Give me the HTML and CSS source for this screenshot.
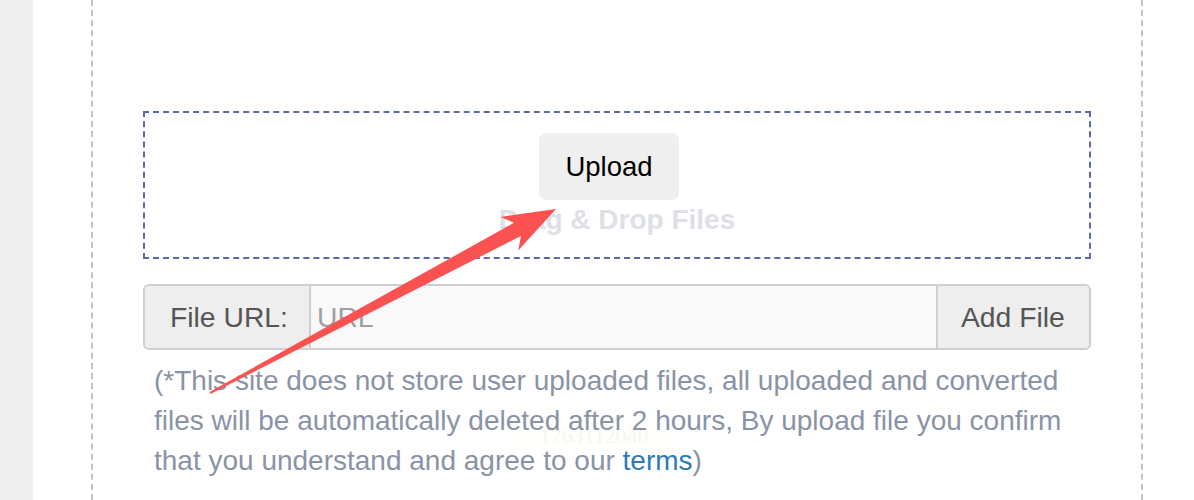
FILE: index.html
```html
<!DOCTYPE html>
<html lang="en">
<head>
<meta charset="utf-8">
<title>Upload</title>
<link rel="stylesheet" href="styles.css">
</head>
<body>
<div class="page">
  <aside class="sidebar"></aside>
  <main class="main">
    <section class="container">
      <div class="dropzone">
        <button class="upload-btn" type="button">Upload</button>
        <div class="drag-text">Drag &amp; Drop Files</div>
      </div>
      <div class="url-group">
        <span class="addon addon-label">File URL:</span>
        <input class="url-input" type="text" placeholder="URL">
        <button class="addon addon-btn" type="button">Add File</button>
      </div>
      <div class="note-wrap">
        <div class="ghost">1763112040</div>
        <p class="note">(*This site does not store user uploaded files, all uploaded and converted files will be automatically deleted after 2 hours, By upload file you confirm that you understand and agree to our <a href="#" class="terms">terms</a>)</p>
      </div>
    </section>
  </main>
  <svg class="arrow" width="1194" height="500" viewBox="0 0 1194 500" aria-hidden="true">
    <polygon points="209.5,392.1 514,222.8 500.4,216.9 556,209 518.2,250.5 521,236 210.5,393.9" fill="#fc5151"/>
  </svg>
</div>
</body>
</html>
```
FILE: styles.css
```css
* { box-sizing: border-box; }
html, body { margin: 0; padding: 0; background: #fff; }
body { font-family: "Liberation Sans", Arial, sans-serif; }

.page {
  position: relative;
  display: flex;
  width: 1194px;
  height: 500px;
  overflow: hidden;
}
.sidebar {
  width: 33px;
  flex: none;
  background: #eeeeee;
}
.main {
  flex: 1;
  padding-left: 58px;
  padding-right: 51px;
}
.container {
  height: 100%;
  border-left: 2px dashed #c2c2c2;
  border-right: 2px dashed #c2c2c2;
  padding: 111px 50px 0 50px;
}

.dropzone {
  border: 2px dashed #5d68a8;
  height: 148px;
  padding-top: 20px;
  display: flex;
  flex-direction: column;
  align-items: center;
}
.upload-btn {
  width: 140px;
  height: 67px;
  margin-right: 16px;
  border: none;
  border-radius: 7px;
  background: #efefef;
  color: #000;
  font-family: "Liberation Sans", Arial, sans-serif;
  font-size: 27.5px;
  padding: 0;
}
.drag-text {
  font-size: 28px;
  font-weight: bold;
  line-height: 40px;
  color: #dee0e8;
}

.url-group {
  margin-top: 25px;
  display: flex;
  height: 66px;
  border: 2px solid #cfcfcf;
  border-radius: 6px;
  overflow: hidden;
}
.addon {
  display: flex;
  align-items: center;
  background: #eeeeee;
  color: #555;
  font-family: "Liberation Sans", Arial, sans-serif;
  font-size: 28.3px;
}
.addon-label {
  width: 166px;
  padding-left: 25px;
  border-right: 2px solid #cfcfcf;
}
.url-input {
  flex: 1;
  min-width: 0;
  border: none;
  outline: none;
  background: #f9f9f9;
  padding: 0 0 0 6px;
  font-family: "Liberation Sans", Arial, sans-serif;
  font-size: 28.3px;
  color: #555;
}
.url-input::placeholder { color: #a0a0a0; }
.addon-btn {
  width: 153px;
  border: none;
  border-left: 2px solid #cfcfcf;
  padding: 0 0 0 23px;
}

.note-wrap { position: relative; }
.ghost {
  position: absolute;
  left: 372px;
  top: 62px;
  width: 158px;
  height: 25px;
  background: #fffffb;
  color: #f6f5ee;
  font-family: "Liberation Serif", serif;
  font-size: 22px;
  line-height: 25px;
  text-align: center;
}
.note {
  position: relative;
  margin: 11px 0 0 0;
  padding: 0 0 0 11px;
  font-size: 28px;
  line-height: 40px;
  color: #8a93a6;
}
.terms {
  color: #2f79b5;
  text-decoration: none;
}

.arrow {
  position: absolute;
  left: 0;
  top: 0;
  pointer-events: none;
}
```
